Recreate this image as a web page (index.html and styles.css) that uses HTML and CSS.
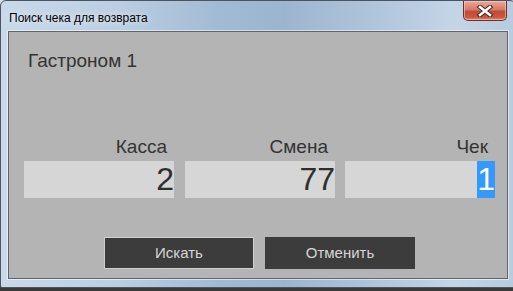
FILE: index.html
```html
<!DOCTYPE html>
<html lang="ru">
<head>
<meta charset="utf-8">
<link rel="stylesheet" href="styles.css">
</head>
<body>
<div class="window">
  <div class="titlebar">
    <span class="title">Поиск чека для возврата</span>
    <div class="close">
      <svg width="18" height="12" viewBox="0 0 18 12">
        <path d="M4 2 L14 10 M14 2 L4 10" stroke="#3a2a2a" stroke-width="4.6" stroke-linecap="square" fill="none"/>
        <path d="M4 2 L14 10 M14 2 L4 10" stroke="#ffffff" stroke-width="2.6" stroke-linecap="square" fill="none"/>
      </svg>
    </div>
  </div>
  <div class="client">
    <div class="store">Гастроном 1</div>
    <div class="fields">
      <div class="field f1">
        <div class="label">Касса</div>
        <div class="box">2</div>
      </div>
      <div class="field">
        <div class="label">Смена</div>
        <div class="box">77</div>
      </div>
      <div class="field">
        <div class="label">Чек</div>
        <div class="box"><span class="sel">1</span></div>
      </div>
    </div>
    <div class="buttons">
      <div class="btn btn-default">Искать</div>
      <div class="btn">Отменить</div>
    </div>
  </div>
</div>
</body>
</html>
```

FILE: styles.css
```css
html, body {
  margin: 0;
  padding: 0;
}
body {
  width: 513px;
  height: 291px;
  overflow: hidden;
  background: linear-gradient(#d9dde2 0, #d9dde2 20px, #3a3a3a 20px);
  font-family: "Liberation Sans", Arial, sans-serif;
}
.window {
  box-sizing: border-box;
  width: 516px;
  height: 288px;
  border: 1px solid #4a5563;
  border-radius: 6px 6px 2px 2px;
  padding: 0 7px 8px 7px;
  background:
    linear-gradient(to right, #c9d9ea 0%, #bccfe2 22%, #a2bbd4 42%, #9cb5cf 55%, #afc4da 72%, #c4d5e6 88%, #b7cbdf 100%);
  display: flex;
  flex-direction: column;
}
.titlebar {
  height: 30px;
  display: flex;
  justify-content: space-between;
  align-items: flex-start;
}
.title {
  font-size: 12px;
  line-height: 14px;
  padding-top: 10px;
  padding-left: 1px;
  color: #000;
  text-shadow: 0 0 6px rgba(255,255,255,0.9);
}
.close {
  box-sizing: border-box;
  width: 44px;
  height: 20px;
  margin-right: 1px;
  border: 1px solid #6e2e26;
  border-top: none;
  border-radius: 0 0 5px 5px;
  background: linear-gradient(#e9a99a 0%, #d67a68 45%, #c34a38 55%, #c9563f 85%, #e08a6e 100%);
  box-shadow: inset 0 0 0 1px rgba(255,220,210,0.5);
  display: flex;
  align-items: center;
  justify-content: center;
}
.close svg {
  display: block;
}
.client {
  box-sizing: border-box;
  height: 248px;
  border: 1px solid #5c6570;
  box-shadow: 0 0 0 1px rgba(255,255,255,0.55);
  background: #b4b4b4;
  padding: 18px 0 0 0;
  display: flex;
  flex-direction: column;
}
.store {
  font-size: 19px;
  line-height: 22px;
  color: #333;
  padding-left: 19px;
}
.fields {
  display: flex;
  margin-top: 64px;
  padding-left: 15px;
  gap: 10px;
}
.field {
  width: 150px;
  display: flex;
  flex-direction: column;
}
.f1 {
  margin-right: 1px;
}
.label {
  font-size: 19px;
  line-height: 22px;
  color: #333;
  text-align: right;
  padding-right: 7px;
  margin-bottom: 3px;
}
.box {
  height: 37px;
  background: #d6d6d6;
  text-align: right;
  font-size: 32px;
  line-height: 37px;
  color: #2e2e2e;
}
.sel {
  display: inline-block;
  background: #3399ff;
  color: #fff;
  height: 37px;
  vertical-align: top;
}
.buttons {
  display: flex;
  gap: 11px;
  margin-top: 39px;
  padding-left: 95px;
}
.btn {
  box-sizing: border-box;
  width: 150px;
  height: 32px;
  background: #3c3c3c;
  color: #d6d6d6;
  font-size: 15px;
  line-height: 32px;
  text-align: center;
}
.btn-default {
  border: 1px solid #cfcfcf;
  line-height: 30px;
}
```
